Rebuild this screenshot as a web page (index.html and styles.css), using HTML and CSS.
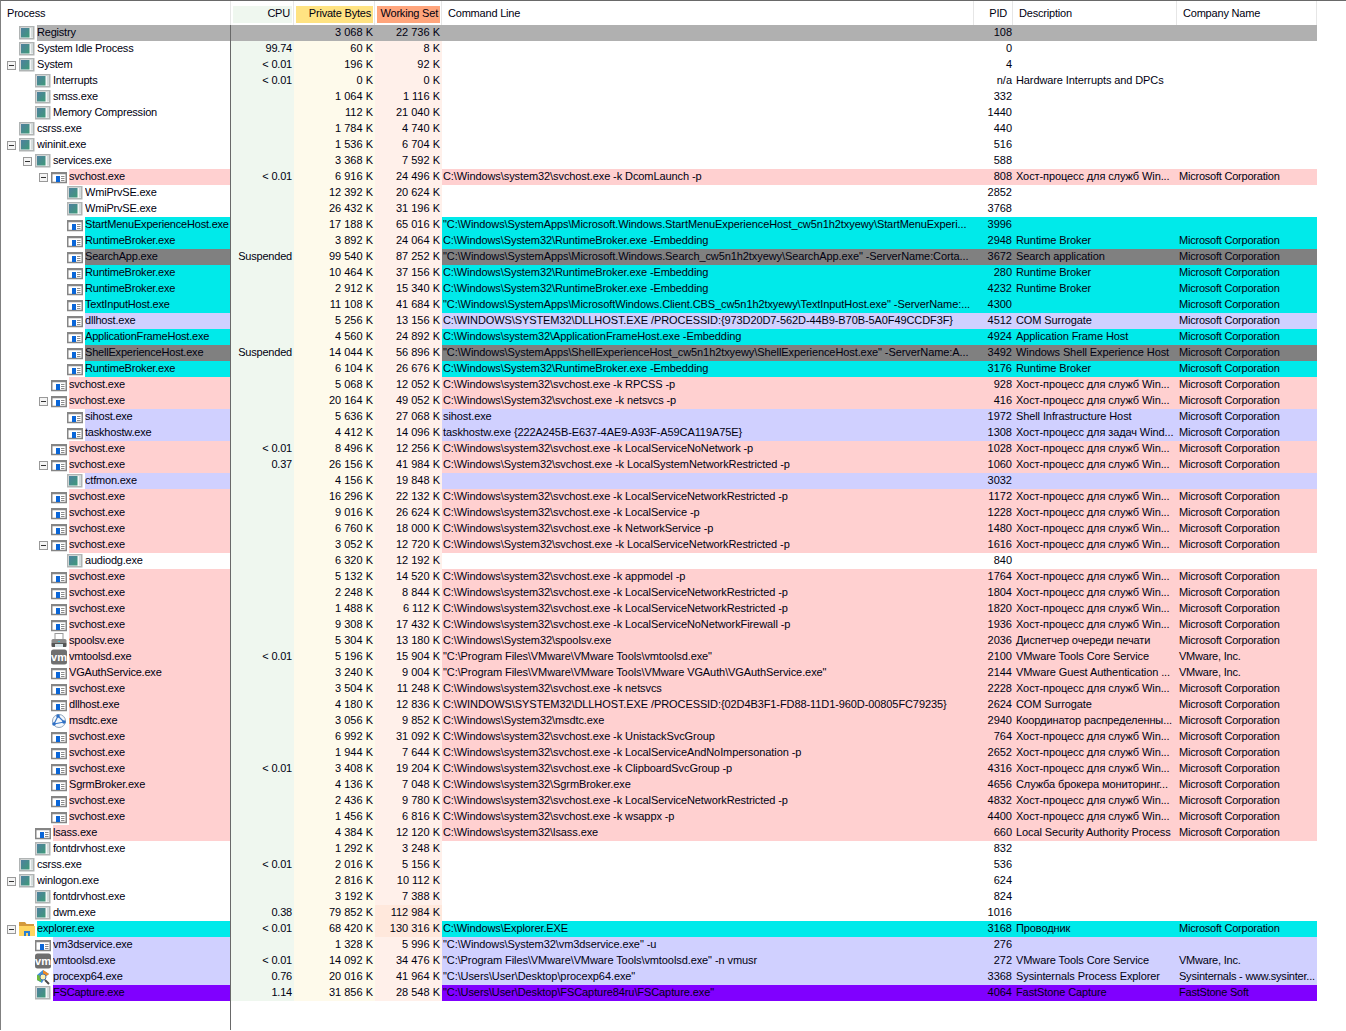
FILE: index.html
```html
<!DOCTYPE html>
<html lang="ru">
<head>
  <meta charset="UTF-8" />
  <title>Process Explorer</title>
  <link rel="stylesheet" href="styles.css">
</head>
<body>
  <svg class="defs" width="0" height="0">
    <defs>
      <linearGradient id="teal" x1="0" y1="0" x2="1" y2="1">
        <stop offset="0" stop-color="#4f7fa0"/>
        <stop offset="1" stop-color="#3f9a78"/>
      </linearGradient>
      <symbol id="app" viewBox="0 0 16 16">
        <rect x="0.75" y="1.75" width="14" height="12" fill="#f4f6f6" stroke="#b0b4b4" stroke-width="1.5"/>
        <rect x="2" y="3" width="8.500" height="9.500" fill="url(#teal)"/>
        <rect x="12" y="3" width="2" height="9.500" fill="#d4dcdc"/>
      </symbol>
      <symbol id="svc" viewBox="0 0 16 16">
        <rect x="0.75" y="4.500" width="14.500" height="9" fill="#fff" stroke="#858585" stroke-width="1.500"/>
        <rect x="0" y="3" width="16" height="2" fill="#858585"/>
        <rect x="5" y="7" width="4" height="6" fill="#0a66d8"/>
        <path d="M10 7.500h3.500M10 9.500h3.500M10 11.500h3.500" stroke="#8c8c8c"/>
      </symbol>
      <symbol id="vm" viewBox="0 0 16 16">
        <rect x="0" y="0.500" width="16" height="15" rx="2.500" fill="#6f6f6f"/>
        <text x="8" y="11.500" text-anchor="middle" class="vm-text">vm</text>
      </symbol>
      <symbol id="printer" viewBox="0 0 16 16">
        <rect x="4" y="0.500" width="8" height="6" fill="#fff" stroke="#999"/>
        <rect x="0.500" y="6" width="15" height="6" rx="1.500" fill="#8a8a8a"/>
        <rect x="0.500" y="10" width="15" height="4" rx="1" fill="#555"/>
        <rect x="4" y="11" width="8" height="3" fill="#d8e4e8"/>
        <rect x="7" y="8" width="2" height="1" fill="#38c0d0"/>
      </symbol>
      <symbol id="dtc" viewBox="0 0 16 16">
        <circle cx="8" cy="8" r="6.500" fill="#f4f8fc" stroke="#8fa4bc"/>
        <path d="M7 3 3 11 13 9Z" fill="none" stroke="#3a78c8" stroke-width="1.200"/>
        <circle cx="7" cy="3" r="1.800" fill="#2e6fc4"/>
        <circle cx="3" cy="11" r="1.800" fill="#2e6fc4"/>
        <circle cx="13" cy="9" r="1.800" fill="#2e6fc4"/>
      </symbol>
      <symbol id="folder" viewBox="0 0 16 16">
        <path d="M0 1h6l1.500 2H15v2H0Z" fill="#d49a3c"/>
        <rect x="0" y="5" width="16" height="10" fill="#ffd560"/>
        <rect x="5" y="10" width="6" height="5" fill="#2a7fd4"/>
        <rect x="7" y="12" width="2" height="3" fill="#ffd560"/>
      </symbol>
      <symbol id="procexp" viewBox="0 0 16 16">
        <path d="M2 6 8 1l6 4-4 3-3 6-5-3Z" fill="#3f8fd8"/>
        <path d="M8 1l6 4-4 3-2-2Z" fill="#f08a24"/>
        <path d="M2 6l5 1-1 6-4-2Z" fill="#6fb83c"/>
        <circle cx="8" cy="8" r="3" fill="#fff2b0" stroke="#4a78b0"/>
        <path d="M10 11l4 4" stroke="#4a4a4a" stroke-width="2"/>
      </symbol>
    </defs>
  </svg>

  <div class="table">
    <div class="head">
      <div class="h h-proc">Process</div>
      <div class="h h-num"><span class="chip chip-cpu">CPU</span></div>
      <div class="h h-num"><span class="chip chip-priv">Private Bytes</span></div>
      <div class="h h-num"><span class="chip chip-ws">Working Set</span></div>
      <div class="h h-text">Command Line</div>
      <div class="h h-pid">PID</div>
      <div class="h h-text">Description</div>
      <div class="h h-text">Company Name</div>
    </div>

    <div class="row reg"><div class="proc d0"><span class="tog"></span><svg class="ico"><use href="#app"/></svg><span class="name">Registry</span></div><span class="cpu"></span><span class="priv">3 068 K</span><span class="ws">22 736 K</span><span class="cmd"></span><span class="pid">108</span><span class="desc"></span><span class="co"></span></div>
    <div class="row"><div class="proc d0"><span class="tog"></span><svg class="ico"><use href="#app"/></svg><span class="name">System Idle Process</span></div><span class="cpu">99.74</span><span class="priv">60 K</span><span class="ws">8 K</span><span class="cmd"></span><span class="pid">0</span><span class="desc"></span><span class="co"></span></div>
    <div class="row"><div class="proc d0"><span class="tog open"></span><svg class="ico"><use href="#app"/></svg><span class="name">System</span></div><span class="cpu">&lt; 0.01</span><span class="priv">196 K</span><span class="ws">92 K</span><span class="cmd"></span><span class="pid">4</span><span class="desc"></span><span class="co"></span></div>
    <div class="row"><div class="proc d1"><span class="tog"></span><svg class="ico"><use href="#app"/></svg><span class="name">Interrupts</span></div><span class="cpu">&lt; 0.01</span><span class="priv">0 K</span><span class="ws">0 K</span><span class="cmd"></span><span class="pid">n/a</span><span class="desc">Hardware Interrupts and DPCs</span><span class="co"></span></div>
    <div class="row"><div class="proc d1"><span class="tog"></span><svg class="ico"><use href="#app"/></svg><span class="name">smss.exe</span></div><span class="cpu"></span><span class="priv">1 064 K</span><span class="ws">1 116 K</span><span class="cmd"></span><span class="pid">332</span><span class="desc"></span><span class="co"></span></div>
    <div class="row"><div class="proc d1"><span class="tog"></span><svg class="ico"><use href="#app"/></svg><span class="name">Memory Compression</span></div><span class="cpu"></span><span class="priv">112 K</span><span class="ws">21 040 K</span><span class="cmd"></span><span class="pid">1440</span><span class="desc"></span><span class="co"></span></div>
    <div class="row"><div class="proc d0"><span class="tog"></span><svg class="ico"><use href="#app"/></svg><span class="name">csrss.exe</span></div><span class="cpu"></span><span class="priv">1 784 K</span><span class="ws">4 740 K</span><span class="cmd"></span><span class="pid">440</span><span class="desc"></span><span class="co"></span></div>
    <div class="row"><div class="proc d0"><span class="tog open"></span><svg class="ico"><use href="#app"/></svg><span class="name">wininit.exe</span></div><span class="cpu"></span><span class="priv">1 536 K</span><span class="ws">6 704 K</span><span class="cmd"></span><span class="pid">516</span><span class="desc"></span><span class="co"></span></div>
    <div class="row"><div class="proc d1"><span class="tog open"></span><svg class="ico"><use href="#app"/></svg><span class="name">services.exe</span></div><span class="cpu"></span><span class="priv">3 368 K</span><span class="ws">7 592 K</span><span class="cmd"></span><span class="pid">588</span><span class="desc"></span><span class="co"></span></div>
    <div class="row pink"><div class="proc d2"><span class="tog open"></span><svg class="ico"><use href="#svc"/></svg><span class="name">svchost.exe</span></div><span class="cpu">&lt; 0.01</span><span class="priv">6 916 K</span><span class="ws">24 496 K</span><span class="cmd">C:\Windows\system32\svchost.exe -k DcomLaunch -p</span><span class="pid">808</span><span class="desc">Хост-процесс для служб Win...</span><span class="co">Microsoft Corporation</span></div>
    <div class="row"><div class="proc d3"><span class="tog"></span><svg class="ico"><use href="#app"/></svg><span class="name">WmiPrvSE.exe</span></div><span class="cpu"></span><span class="priv">12 392 K</span><span class="ws">20 624 K</span><span class="cmd"></span><span class="pid">2852</span><span class="desc"></span><span class="co"></span></div>
    <div class="row"><div class="proc d3"><span class="tog"></span><svg class="ico"><use href="#app"/></svg><span class="name">WmiPrvSE.exe</span></div><span class="cpu"></span><span class="priv">26 432 K</span><span class="ws">31 196 K</span><span class="cmd"></span><span class="pid">3768</span><span class="desc"></span><span class="co"></span></div>
    <div class="row cyan"><div class="proc d3"><span class="tog"></span><svg class="ico"><use href="#svc"/></svg><span class="name">StartMenuExperienceHost.exe</span></div><span class="cpu"></span><span class="priv">17 188 K</span><span class="ws">65 016 K</span><span class="cmd">"C:\Windows\SystemApps\Microsoft.Windows.StartMenuExperienceHost_cw5n1h2txyewy\StartMenuExperi...</span><span class="pid">3996</span><span class="desc"></span><span class="co"></span></div>
    <div class="row cyan"><div class="proc d3"><span class="tog"></span><svg class="ico"><use href="#svc"/></svg><span class="name">RuntimeBroker.exe</span></div><span class="cpu"></span><span class="priv">3 892 K</span><span class="ws">24 064 K</span><span class="cmd">C:\Windows\System32\RuntimeBroker.exe -Embedding</span><span class="pid">2948</span><span class="desc">Runtime Broker</span><span class="co">Microsoft Corporation</span></div>
    <div class="row grey"><div class="proc d3"><span class="tog"></span><svg class="ico"><use href="#svc"/></svg><span class="name">SearchApp.exe</span></div><span class="cpu">Suspended</span><span class="priv">99 540 K</span><span class="ws">87 252 K</span><span class="cmd">"C:\Windows\SystemApps\Microsoft.Windows.Search_cw5n1h2txyewy\SearchApp.exe" -ServerName:Corta...</span><span class="pid">3672</span><span class="desc">Search application</span><span class="co">Microsoft Corporation</span></div>
    <div class="row cyan"><div class="proc d3"><span class="tog"></span><svg class="ico"><use href="#svc"/></svg><span class="name">RuntimeBroker.exe</span></div><span class="cpu"></span><span class="priv">10 464 K</span><span class="ws">37 156 K</span><span class="cmd">C:\Windows\System32\RuntimeBroker.exe -Embedding</span><span class="pid">280</span><span class="desc">Runtime Broker</span><span class="co">Microsoft Corporation</span></div>
    <div class="row cyan"><div class="proc d3"><span class="tog"></span><svg class="ico"><use href="#svc"/></svg><span class="name">RuntimeBroker.exe</span></div><span class="cpu"></span><span class="priv">2 912 K</span><span class="ws">15 340 K</span><span class="cmd">C:\Windows\System32\RuntimeBroker.exe -Embedding</span><span class="pid">4232</span><span class="desc">Runtime Broker</span><span class="co">Microsoft Corporation</span></div>
    <div class="row cyan"><div class="proc d3"><span class="tog"></span><svg class="ico"><use href="#svc"/></svg><span class="name">TextInputHost.exe</span></div><span class="cpu"></span><span class="priv">11 108 K</span><span class="ws">41 684 K</span><span class="cmd">"C:\Windows\SystemApps\MicrosoftWindows.Client.CBS_cw5n1h2txyewy\TextInputHost.exe" -ServerName:...</span><span class="pid">4300</span><span class="desc"></span><span class="co">Microsoft Corporation</span></div>
    <div class="row lav"><div class="proc d3"><span class="tog"></span><svg class="ico"><use href="#svc"/></svg><span class="name">dllhost.exe</span></div><span class="cpu"></span><span class="priv">5 256 K</span><span class="ws">13 156 K</span><span class="cmd">C:\WINDOWS\SYSTEM32\DLLHOST.EXE /PROCESSID:{973D20D7-562D-44B9-B70B-5A0F49CCDF3F}</span><span class="pid">4512</span><span class="desc">COM Surrogate</span><span class="co">Microsoft Corporation</span></div>
    <div class="row cyan"><div class="proc d3"><span class="tog"></span><svg class="ico"><use href="#svc"/></svg><span class="name">ApplicationFrameHost.exe</span></div><span class="cpu"></span><span class="priv">4 560 K</span><span class="ws">24 892 K</span><span class="cmd">C:\Windows\system32\ApplicationFrameHost.exe -Embedding</span><span class="pid">4924</span><span class="desc">Application Frame Host</span><span class="co">Microsoft Corporation</span></div>
    <div class="row grey"><div class="proc d3"><span class="tog"></span><svg class="ico"><use href="#svc"/></svg><span class="name">ShellExperienceHost.exe</span></div><span class="cpu">Suspended</span><span class="priv">14 044 K</span><span class="ws">56 896 K</span><span class="cmd">"C:\Windows\SystemApps\ShellExperienceHost_cw5n1h2txyewy\ShellExperienceHost.exe" -ServerName:A...</span><span class="pid">3492</span><span class="desc">Windows Shell Experience Host</span><span class="co">Microsoft Corporation</span></div>
    <div class="row cyan"><div class="proc d3"><span class="tog"></span><svg class="ico"><use href="#svc"/></svg><span class="name">RuntimeBroker.exe</span></div><span class="cpu"></span><span class="priv">6 104 K</span><span class="ws">26 676 K</span><span class="cmd">C:\Windows\System32\RuntimeBroker.exe -Embedding</span><span class="pid">3176</span><span class="desc">Runtime Broker</span><span class="co">Microsoft Corporation</span></div>
    <div class="row pink"><div class="proc d2"><span class="tog"></span><svg class="ico"><use href="#svc"/></svg><span class="name">svchost.exe</span></div><span class="cpu"></span><span class="priv">5 068 K</span><span class="ws">12 052 K</span><span class="cmd">C:\Windows\system32\svchost.exe -k RPCSS -p</span><span class="pid">928</span><span class="desc">Хост-процесс для служб Win...</span><span class="co">Microsoft Corporation</span></div>
    <div class="row pink"><div class="proc d2"><span class="tog open"></span><svg class="ico"><use href="#svc"/></svg><span class="name">svchost.exe</span></div><span class="cpu"></span><span class="priv">20 164 K</span><span class="ws">49 052 K</span><span class="cmd">C:\Windows\System32\svchost.exe -k netsvcs -p</span><span class="pid">416</span><span class="desc">Хост-процесс для служб Win...</span><span class="co">Microsoft Corporation</span></div>
    <div class="row lav"><div class="proc d3"><span class="tog"></span><svg class="ico"><use href="#svc"/></svg><span class="name">sihost.exe</span></div><span class="cpu"></span><span class="priv">5 636 K</span><span class="ws">27 068 K</span><span class="cmd">sihost.exe</span><span class="pid">1972</span><span class="desc">Shell Infrastructure Host</span><span class="co">Microsoft Corporation</span></div>
    <div class="row lav"><div class="proc d3"><span class="tog"></span><svg class="ico"><use href="#svc"/></svg><span class="name">taskhostw.exe</span></div><span class="cpu"></span><span class="priv">4 412 K</span><span class="ws">14 096 K</span><span class="cmd">taskhostw.exe {222A245B-E637-4AE9-A93F-A59CA119A75E}</span><span class="pid">1308</span><span class="desc">Хост-процесс для задач Wind...</span><span class="co">Microsoft Corporation</span></div>
    <div class="row pink"><div class="proc d2"><span class="tog"></span><svg class="ico"><use href="#svc"/></svg><span class="name">svchost.exe</span></div><span class="cpu">&lt; 0.01</span><span class="priv">8 496 K</span><span class="ws">12 256 K</span><span class="cmd">C:\Windows\system32\svchost.exe -k LocalServiceNoNetwork -p</span><span class="pid">1028</span><span class="desc">Хост-процесс для служб Win...</span><span class="co">Microsoft Corporation</span></div>
    <div class="row pink"><div class="proc d2"><span class="tog open"></span><svg class="ico"><use href="#svc"/></svg><span class="name">svchost.exe</span></div><span class="cpu">0.37</span><span class="priv">26 156 K</span><span class="ws">41 984 K</span><span class="cmd">C:\Windows\System32\svchost.exe -k LocalSystemNetworkRestricted -p</span><span class="pid">1060</span><span class="desc">Хост-процесс для служб Win...</span><span class="co">Microsoft Corporation</span></div>
    <div class="row lav"><div class="proc d3"><span class="tog"></span><svg class="ico"><use href="#app"/></svg><span class="name">ctfmon.exe</span></div><span class="cpu"></span><span class="priv">4 156 K</span><span class="ws">19 848 K</span><span class="cmd"></span><span class="pid">3032</span><span class="desc"></span><span class="co"></span></div>
    <div class="row pink"><div class="proc d2"><span class="tog"></span><svg class="ico"><use href="#svc"/></svg><span class="name">svchost.exe</span></div><span class="cpu"></span><span class="priv">16 296 K</span><span class="ws">22 132 K</span><span class="cmd">C:\Windows\system32\svchost.exe -k LocalServiceNetworkRestricted -p</span><span class="pid">1172</span><span class="desc">Хост-процесс для служб Win...</span><span class="co">Microsoft Corporation</span></div>
    <div class="row pink"><div class="proc d2"><span class="tog"></span><svg class="ico"><use href="#svc"/></svg><span class="name">svchost.exe</span></div><span class="cpu"></span><span class="priv">9 016 K</span><span class="ws">26 624 K</span><span class="cmd">C:\Windows\system32\svchost.exe -k LocalService -p</span><span class="pid">1228</span><span class="desc">Хост-процесс для служб Win...</span><span class="co">Microsoft Corporation</span></div>
    <div class="row pink"><div class="proc d2"><span class="tog"></span><svg class="ico"><use href="#svc"/></svg><span class="name">svchost.exe</span></div><span class="cpu"></span><span class="priv">6 760 K</span><span class="ws">18 000 K</span><span class="cmd">C:\Windows\system32\svchost.exe -k NetworkService -p</span><span class="pid">1480</span><span class="desc">Хост-процесс для служб Win...</span><span class="co">Microsoft Corporation</span></div>
    <div class="row pink"><div class="proc d2"><span class="tog open"></span><svg class="ico"><use href="#svc"/></svg><span class="name">svchost.exe</span></div><span class="cpu"></span><span class="priv">3 052 K</span><span class="ws">12 720 K</span><span class="cmd">C:\Windows\System32\svchost.exe -k LocalServiceNetworkRestricted -p</span><span class="pid">1616</span><span class="desc">Хост-процесс для служб Win...</span><span class="co">Microsoft Corporation</span></div>
    <div class="row"><div class="proc d3"><span class="tog"></span><svg class="ico"><use href="#app"/></svg><span class="name">audiodg.exe</span></div><span class="cpu"></span><span class="priv">6 320 K</span><span class="ws">12 192 K</span><span class="cmd"></span><span class="pid">840</span><span class="desc"></span><span class="co"></span></div>
    <div class="row pink"><div class="proc d2"><span class="tog"></span><svg class="ico"><use href="#svc"/></svg><span class="name">svchost.exe</span></div><span class="cpu"></span><span class="priv">5 132 K</span><span class="ws">14 520 K</span><span class="cmd">C:\Windows\system32\svchost.exe -k appmodel -p</span><span class="pid">1764</span><span class="desc">Хост-процесс для служб Win...</span><span class="co">Microsoft Corporation</span></div>
    <div class="row pink"><div class="proc d2"><span class="tog"></span><svg class="ico"><use href="#svc"/></svg><span class="name">svchost.exe</span></div><span class="cpu"></span><span class="priv">2 248 K</span><span class="ws">8 844 K</span><span class="cmd">C:\Windows\system32\svchost.exe -k LocalServiceNetworkRestricted -p</span><span class="pid">1804</span><span class="desc">Хост-процесс для служб Win...</span><span class="co">Microsoft Corporation</span></div>
    <div class="row pink"><div class="proc d2"><span class="tog"></span><svg class="ico"><use href="#svc"/></svg><span class="name">svchost.exe</span></div><span class="cpu"></span><span class="priv">1 488 K</span><span class="ws">6 112 K</span><span class="cmd">C:\Windows\system32\svchost.exe -k LocalServiceNetworkRestricted -p</span><span class="pid">1820</span><span class="desc">Хост-процесс для служб Win...</span><span class="co">Microsoft Corporation</span></div>
    <div class="row pink"><div class="proc d2"><span class="tog"></span><svg class="ico"><use href="#svc"/></svg><span class="name">svchost.exe</span></div><span class="cpu"></span><span class="priv">9 308 K</span><span class="ws">17 432 K</span><span class="cmd">C:\Windows\system32\svchost.exe -k LocalServiceNoNetworkFirewall -p</span><span class="pid">1936</span><span class="desc">Хост-процесс для служб Win...</span><span class="co">Microsoft Corporation</span></div>
    <div class="row pink"><div class="proc d2"><span class="tog"></span><svg class="ico"><use href="#printer"/></svg><span class="name">spoolsv.exe</span></div><span class="cpu"></span><span class="priv">5 304 K</span><span class="ws">13 180 K</span><span class="cmd">C:\Windows\System32\spoolsv.exe</span><span class="pid">2036</span><span class="desc">Диспетчер очереди печати</span><span class="co">Microsoft Corporation</span></div>
    <div class="row pink"><div class="proc d2"><span class="tog"></span><svg class="ico"><use href="#vm"/></svg><span class="name">vmtoolsd.exe</span></div><span class="cpu">&lt; 0.01</span><span class="priv">5 196 K</span><span class="ws">15 904 K</span><span class="cmd">"C:\Program Files\VMware\VMware Tools\vmtoolsd.exe"</span><span class="pid">2100</span><span class="desc">VMware Tools Core Service</span><span class="co">VMware, Inc.</span></div>
    <div class="row pink"><div class="proc d2"><span class="tog"></span><svg class="ico"><use href="#svc"/></svg><span class="name">VGAuthService.exe</span></div><span class="cpu"></span><span class="priv">3 240 K</span><span class="ws">9 004 K</span><span class="cmd">"C:\Program Files\VMware\VMware Tools\VMware VGAuth\VGAuthService.exe"</span><span class="pid">2144</span><span class="desc">VMware Guest Authentication ...</span><span class="co">VMware, Inc.</span></div>
    <div class="row pink"><div class="proc d2"><span class="tog"></span><svg class="ico"><use href="#svc"/></svg><span class="name">svchost.exe</span></div><span class="cpu"></span><span class="priv">3 504 K</span><span class="ws">11 248 K</span><span class="cmd">C:\Windows\system32\svchost.exe -k netsvcs</span><span class="pid">2228</span><span class="desc">Хост-процесс для служб Win...</span><span class="co">Microsoft Corporation</span></div>
    <div class="row pink"><div class="proc d2"><span class="tog"></span><svg class="ico"><use href="#svc"/></svg><span class="name">dllhost.exe</span></div><span class="cpu"></span><span class="priv">4 180 K</span><span class="ws">12 836 K</span><span class="cmd">C:\WINDOWS\SYSTEM32\DLLHOST.EXE /PROCESSID:{02D4B3F1-FD88-11D1-960D-00805FC79235}</span><span class="pid">2624</span><span class="desc">COM Surrogate</span><span class="co">Microsoft Corporation</span></div>
    <div class="row pink"><div class="proc d2"><span class="tog"></span><svg class="ico"><use href="#dtc"/></svg><span class="name">msdtc.exe</span></div><span class="cpu"></span><span class="priv">3 056 K</span><span class="ws">9 852 K</span><span class="cmd">C:\Windows\System32\msdtc.exe</span><span class="pid">2940</span><span class="desc">Координатор распределенны...</span><span class="co">Microsoft Corporation</span></div>
    <div class="row pink"><div class="proc d2"><span class="tog"></span><svg class="ico"><use href="#svc"/></svg><span class="name">svchost.exe</span></div><span class="cpu"></span><span class="priv">6 992 K</span><span class="ws">31 092 K</span><span class="cmd">C:\Windows\system32\svchost.exe -k UnistackSvcGroup</span><span class="pid">764</span><span class="desc">Хост-процесс для служб Win...</span><span class="co">Microsoft Corporation</span></div>
    <div class="row pink"><div class="proc d2"><span class="tog"></span><svg class="ico"><use href="#svc"/></svg><span class="name">svchost.exe</span></div><span class="cpu"></span><span class="priv">1 944 K</span><span class="ws">7 644 K</span><span class="cmd">C:\Windows\system32\svchost.exe -k LocalServiceAndNoImpersonation -p</span><span class="pid">2652</span><span class="desc">Хост-процесс для служб Win...</span><span class="co">Microsoft Corporation</span></div>
    <div class="row pink"><div class="proc d2"><span class="tog"></span><svg class="ico"><use href="#svc"/></svg><span class="name">svchost.exe</span></div><span class="cpu">&lt; 0.01</span><span class="priv">3 408 K</span><span class="ws">19 204 K</span><span class="cmd">C:\Windows\system32\svchost.exe -k ClipboardSvcGroup -p</span><span class="pid">4316</span><span class="desc">Хост-процесс для служб Win...</span><span class="co">Microsoft Corporation</span></div>
    <div class="row pink"><div class="proc d2"><span class="tog"></span><svg class="ico"><use href="#svc"/></svg><span class="name">SgrmBroker.exe</span></div><span class="cpu"></span><span class="priv">4 136 K</span><span class="ws">7 048 K</span><span class="cmd">C:\Windows\system32\SgrmBroker.exe</span><span class="pid">4656</span><span class="desc">Служба брокера мониторинг...</span><span class="co">Microsoft Corporation</span></div>
    <div class="row pink"><div class="proc d2"><span class="tog"></span><svg class="ico"><use href="#svc"/></svg><span class="name">svchost.exe</span></div><span class="cpu"></span><span class="priv">2 436 K</span><span class="ws">9 780 K</span><span class="cmd">C:\Windows\system32\svchost.exe -k LocalServiceNetworkRestricted -p</span><span class="pid">4832</span><span class="desc">Хост-процесс для служб Win...</span><span class="co">Microsoft Corporation</span></div>
    <div class="row pink"><div class="proc d2"><span class="tog"></span><svg class="ico"><use href="#svc"/></svg><span class="name">svchost.exe</span></div><span class="cpu"></span><span class="priv">1 456 K</span><span class="ws">6 816 K</span><span class="cmd">C:\Windows\system32\svchost.exe -k wsappx -p</span><span class="pid">4400</span><span class="desc">Хост-процесс для служб Win...</span><span class="co">Microsoft Corporation</span></div>
    <div class="row pink"><div class="proc d1"><span class="tog"></span><svg class="ico"><use href="#svc"/></svg><span class="name">lsass.exe</span></div><span class="cpu"></span><span class="priv">4 384 K</span><span class="ws">12 120 K</span><span class="cmd">C:\Windows\system32\lsass.exe</span><span class="pid">660</span><span class="desc">Local Security Authority Process</span><span class="co">Microsoft Corporation</span></div>
    <div class="row"><div class="proc d1"><span class="tog"></span><svg class="ico"><use href="#app"/></svg><span class="name">fontdrvhost.exe</span></div><span class="cpu"></span><span class="priv">1 292 K</span><span class="ws">3 248 K</span><span class="cmd"></span><span class="pid">832</span><span class="desc"></span><span class="co"></span></div>
    <div class="row"><div class="proc d0"><span class="tog"></span><svg class="ico"><use href="#app"/></svg><span class="name">csrss.exe</span></div><span class="cpu">&lt; 0.01</span><span class="priv">2 016 K</span><span class="ws">5 156 K</span><span class="cmd"></span><span class="pid">536</span><span class="desc"></span><span class="co"></span></div>
    <div class="row"><div class="proc d0"><span class="tog open"></span><svg class="ico"><use href="#app"/></svg><span class="name">winlogon.exe</span></div><span class="cpu"></span><span class="priv">2 816 K</span><span class="ws">10 112 K</span><span class="cmd"></span><span class="pid">624</span><span class="desc"></span><span class="co"></span></div>
    <div class="row"><div class="proc d1"><span class="tog"></span><svg class="ico"><use href="#app"/></svg><span class="name">fontdrvhost.exe</span></div><span class="cpu"></span><span class="priv">3 192 K</span><span class="ws">7 388 K</span><span class="cmd"></span><span class="pid">824</span><span class="desc"></span><span class="co"></span></div>
    <div class="row"><div class="proc d1"><span class="tog"></span><svg class="ico"><use href="#app"/></svg><span class="name">dwm.exe</span></div><span class="cpu">0.38</span><span class="priv">79 852 K</span><span class="ws hot">112 984 K</span><span class="cmd"></span><span class="pid">1016</span><span class="desc"></span><span class="co"></span></div>
    <div class="row cyan"><div class="proc d0"><span class="tog open"></span><svg class="ico"><use href="#folder"/></svg><span class="name">explorer.exe</span></div><span class="cpu">&lt; 0.01</span><span class="priv">68 420 K</span><span class="ws hot">130 316 K</span><span class="cmd">C:\Windows\Explorer.EXE</span><span class="pid">3168</span><span class="desc">Проводник</span><span class="co">Microsoft Corporation</span></div>
    <div class="row lav"><div class="proc d1"><span class="tog"></span><svg class="ico"><use href="#svc"/></svg><span class="name">vm3dservice.exe</span></div><span class="cpu"></span><span class="priv">1 328 K</span><span class="ws">5 996 K</span><span class="cmd">"C:\Windows\System32\vm3dservice.exe" -u</span><span class="pid">276</span><span class="desc"></span><span class="co"></span></div>
    <div class="row lav"><div class="proc d1"><span class="tog"></span><svg class="ico"><use href="#vm"/></svg><span class="name">vmtoolsd.exe</span></div><span class="cpu">&lt; 0.01</span><span class="priv">14 092 K</span><span class="ws">34 476 K</span><span class="cmd">"C:\Program Files\VMware\VMware Tools\vmtoolsd.exe" -n vmusr</span><span class="pid">272</span><span class="desc">VMware Tools Core Service</span><span class="co">VMware, Inc.</span></div>
    <div class="row lav"><div class="proc d1"><span class="tog"></span><svg class="ico"><use href="#procexp"/></svg><span class="name">procexp64.exe</span></div><span class="cpu">0.76</span><span class="priv">20 016 K</span><span class="ws">41 964 K</span><span class="cmd">"C:\Users\User\Desktop\procexp64.exe"</span><span class="pid">3368</span><span class="desc">Sysinternals Process Explorer</span><span class="co">Sysinternals - www.sysinter...</span></div>
    <div class="row violet"><div class="proc d1"><span class="tog"></span><svg class="ico"><use href="#app"/></svg><span class="name">FSCapture.exe</span></div><span class="cpu">1.14</span><span class="priv">31 856 K</span><span class="ws">28 548 K</span><span class="cmd">"C:\Users\User\Desktop\FSCapture84ru\FSCapture.exe"</span><span class="pid">4064</span><span class="desc">FastStone Capture</span><span class="co">FastStone Soft</span></div>

    <div class="rest"></div>
  </div>
</body>
</html>
```

FILE: styles.css
```css
html, body {
  margin: 0;
  background: #ffffff;
}

body {
  font-family: "Liberation Sans", Arial, sans-serif;
  font-size: 11px;
  line-height: 14px;
  color: #000010;
  overflow: hidden;
}

.defs {
  position: absolute;
}

.table {
  border-top: 1px solid #696969;
  border-left: 1px solid #808080;
  height: 1030px;
  box-sizing: border-box;
}

.head,
.row {
  display: grid;
  grid-template-columns: 230px 63px 81px 67px 532px 39px 164px 140px;
  width: 1316px;
  white-space: nowrap;
}

/* header */
.head {
  height: 24px;
  letter-spacing: -0.2px;
}

.h {
  box-sizing: border-box;
  border-right: 1px solid #e6e6e6;
  padding-top: 5px;
  overflow: hidden;
}

.h-proc {
  padding-left: 6px;
}

.h-text {
  padding-left: 6px;
}

.h-pid {
  text-align: right;
  padding-right: 5px;
}

.h-num {
  padding: 5px 0 1px 2px;
  text-align: right;
}

.chip {
  display: block;
  height: 17px;
  margin-right: 1px;
  padding-right: 2px;
}

.chip-cpu {
  background: #eff7ef;
}

.chip-priv {
  background: #ffe382;
}

.chip-ws {
  background: #ffa57c;
}

/* rows */
.row {
  height: 16px;
  --hl: transparent;
}

.pink {
  --hl: #ffd0d0;
}

.cyan {
  --hl: #00eaea;
}

.lav {
  --hl: #d0d0ff;
}

.grey {
  --hl: #808080;
}

.violet {
  --hl: #8000ff;
}

.reg {
  --hl: #b0b0b0;
}

.proc {
  display: flex;
  border-right: 1px solid #696969;
  padding-left: 3px;
  overflow: hidden;
}

.d1 {
  padding-left: 19px;
}

.d2 {
  padding-left: 35px;
}

.d3 {
  padding-left: 51px;
}

.tog {
  flex: 0 0 15px;
  position: relative;
}

.tog.open::before {
  content: "";
  position: absolute;
  left: 3px;
  top: 4px;
  width: 7px;
  height: 7px;
  border: 1px solid #999999;
  background: #f4f4f4;
}

.tog.open::after {
  content: "";
  position: absolute;
  left: 5px;
  top: 8px;
  width: 5px;
  height: 1px;
  background: #333333;
}

.ico {
  flex: 0 0 16px;
  width: 16px;
  height: 16px;
  margin-right: 2px;
}

.vm-text {
  font-family: "Liberation Sans", sans-serif;
  font-size: 11px;
  font-weight: bold;
  fill: #ffffff;
}

.name,
.cmd,
.pid,
.desc,
.co {
  background: var(--hl);
  overflow: hidden;
}

.name {
  flex: 1;
  letter-spacing: -0.2px;
}

.cpu,
.priv,
.ws {
  text-align: right;
  padding-right: 2px;
  overflow: hidden;
}

.cpu {
  background: #eff7ef;
  letter-spacing: -0.2px;
}

.priv {
  background: #fefaeb;
}

.ws {
  background: #fff0ea;
}

.ws.hot {
  background: #ffe8dc;
}

.reg .cpu,
.reg .priv,
.reg .ws {
  background: #b0b0b0;
}

.cmd {
  padding-left: 1px;
  letter-spacing: -0.09px;
}

.pid {
  text-align: right;
  padding-right: 1px;
}

.desc {
  padding-left: 3px;
  letter-spacing: -0.1px;
}

.co {
  padding-left: 2px;
  letter-spacing: -0.22px;
}

.rest {
  box-sizing: border-box;
  width: 230px;
  height: 30px;
  border-right: 1px solid #696969;
}
```
